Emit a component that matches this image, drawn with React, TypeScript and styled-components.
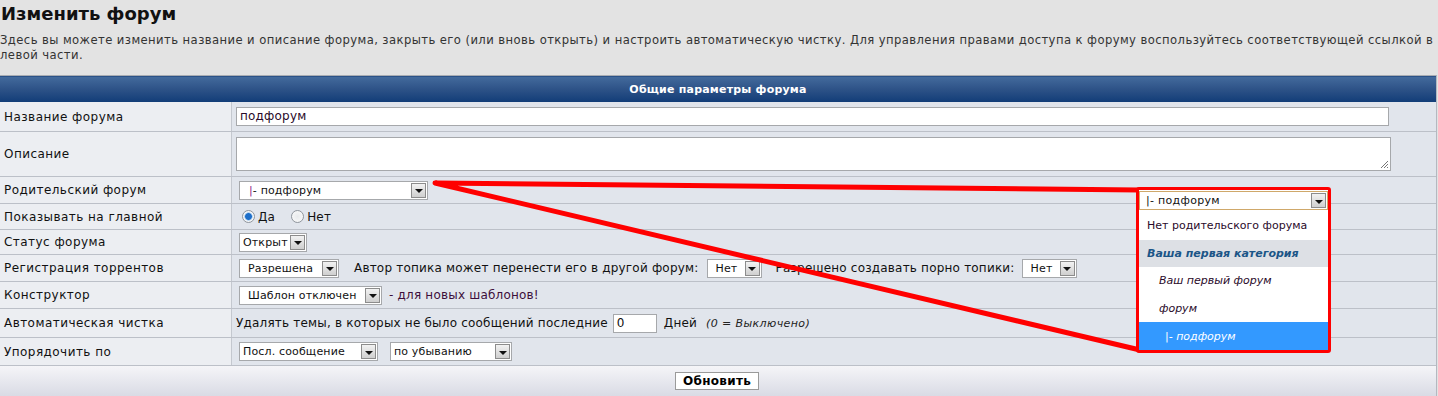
import React, { FunctionComponent } from 'react';
import styled, { createGlobalStyle } from 'styled-components';

const GlobalStyle = createGlobalStyle`
  html, body {
    margin: 0;
    padding: 0;
    background: #e3e3e3;
    font-family: "DejaVu Sans", Verdana, sans-serif;
    color: #000;
  }
`;

const Page = styled.div`
  position: relative;
  width: 1438px;
  height: 396px;
  overflow: hidden;
`;

const Title = styled.h1`
  margin: 0;
  padding: 0 0 0 1px;
  font-size: 18px;
  font-weight: bold;
  line-height: 28px;
  color: #111;
`;

const Intro = styled.p`
  margin: 5px 0 12px 0;
  font-size: 11.6px;
  letter-spacing: 0.42px;
  line-height: 15px;
  color: #333;
  padding-right: 4px;
`;

const Table = styled.div`
  width: 1436px;
  border-right: 1px solid #b4b8c0;
  border-top: 1px solid #a9adb3;
`;

const HeadBar = styled.div`
  height: 25px;
  border-top: 1px solid #2b5288;
  background: linear-gradient(#436a9c, #2d5287 50%, #123d78);
  color: #fff;
  font-size: 11px;
  font-weight: bold;
  letter-spacing: 0.2px;
  display: flex;
  align-items: center;
  justify-content: center;
`;

const Row = styled.div<{ $h: number }>`
  display: flex;
  height: ${p => p.$h}px;
  border-bottom: 1px solid #bcc0c8;
  box-sizing: border-box;
`;

const Label = styled.div`
  width: 232px;
  flex: none;
  background: #eceef2;
  border-right: 1px solid #c4c8cf;
  display: flex;
  align-items: center;
  padding-left: 4px;
  box-sizing: border-box;
  font-size: 12px;
  letter-spacing: 0.45px;
  color: #111;
`;

const Cell = styled.div`
  flex: 1;
  background: #e1e5ec;
  display: flex;
  align-items: center;
  padding-left: 4px;
  font-size: 12px;
  letter-spacing: 0.2px;
  color: #111;
  white-space: nowrap;
`;

const TextInput = styled.div<{ $w: number }>`
  width: ${p => p.$w}px;
  height: 19px;
  box-sizing: border-box;
  background: #fff;
  border: 1px solid #a6a8ab;
  font-size: 12px;
  line-height: 17px;
  padding-left: 3px;
  color: #2a0a2a;
`;

const TextArea = styled.div`
  position: relative;
  width: 1155px;
  height: 34px;
  box-sizing: border-box;
  background: #fff;
  border: 1px solid #a6a8ab;
`;

const Grip = styled.svg`
  position: absolute;
  right: 1px;
  bottom: 1px;
`;

const Select = styled.div<{ $w: number; $pad?: number; $ml?: number }>`
  width: ${p => p.$w}px;
  height: 19px;
  margin-left: ${p => p.$ml ?? 3}px;
  box-sizing: border-box;
  background: #fff;
  border: 1px solid #a6a8ab;
  display: flex;
  align-items: center;
  padding-left: ${p => p.$pad ?? 3}px;
  font-size: 11px;
  letter-spacing: 0.15px;
  color: #111;
`;

const SelectText = styled.span`
  flex: 1;
  overflow: hidden;
  white-space: nowrap;
`;

const Pipe = styled.span`
  color: #8a1a8a;
`;

const ArrowBtn = styled.span`
  flex: none;
  width: 15px;
  height: 15px;
  margin-right: 1px;
  box-sizing: border-box;
  border: 1px solid #8c8c8c;
  background: linear-gradient(#f2f2f2, #cfcfcf);
  display: flex;
  align-items: center;
  justify-content: center;
  &::after {
    content: '';
    border-left: 4px solid transparent;
    border-right: 4px solid transparent;
    border-top: 4px solid #111;
    margin-top: 2px;
  }
`;

const Radio = styled.span<{ $on?: boolean; $ml?: number }>`
  width: 11px;
  height: 11px;
  border-radius: 50%;
  border: 1px solid #8f959c;
  background: ${p => p.$on
    ? 'radial-gradient(circle, #1e6ec8 0 3px, #7fb2e6 3.5px, #f4f6f8 4.5px)'
    : 'radial-gradient(circle, #e8eaec, #fbfbfb)'};
  margin: 0 3px 0 ${p => p.$ml ?? 6}px;
  flex: none;
`;

const Text = styled.span<{ $ml?: number; $color?: string }>`
  margin-left: ${p => p.$ml ?? 0}px;
  color: ${p => p.$color ?? '#111'};
`;

const Hint = styled.i`
  margin-left: 9px;
  font-size: 11px;
  letter-spacing: 0.4px;
  color: #222;
`;

const SmallInput = styled(TextInput)`
  margin-left: 5px;
  color: #111;
`;

const Footer = styled.div`
  height: 31px;
  background: linear-gradient(#f5f5f8, #d8dae4);
  display: flex;
  justify-content: center;
  padding-top: 6px;
  box-sizing: border-box;
`;

const Button = styled.div`
  width: 84px;
  height: 18px;
  box-sizing: border-box;
  background: #fff;
  border: 1px solid #9a9a9a;
  font-size: 12px;
  font-weight: bold;
  letter-spacing: 0.3px;
  text-align: center;
  line-height: 16px;
  margin-left: -2px;
`;

const Overlay = styled.svg`
  position: absolute;
  left: 0;
  top: 0;
  pointer-events: none;
`;

const Popup = styled.div`
  position: absolute;
  left: 1136px;
  top: 187px;
  width: 195px;
  height: 166px;
  box-sizing: border-box;
  border: 3px solid #ff0000;
  border-radius: 3px;
  background: #fff;
  font-size: 11px;
  color: #2a0a2a;
`;

const PopupHead = styled.div`
  height: 19px;
  margin: 1px 0 2px;
  box-sizing: border-box;
  border: 1px solid #cfa86a;
  display: flex;
  align-items: center;
  padding-left: 6px;
  font-size: 11px;
  letter-spacing: 0.3px;
  color: #111;
`;

const Option = styled.div<{ $indent?: number; $kind?: 'cat' | 'sel' | 'sub' }>`
  height: 27.6px;
  display: flex;
  align-items: center;
  padding-left: ${p => 8 + (p.$indent ?? 0)}px;
  font-style: ${p => (p.$kind ? 'italic' : 'normal')};
  font-weight: ${p => (p.$kind === 'cat' ? 'bold' : 'normal')};
  background: ${p => (p.$kind === 'cat' ? '#dde0e5' : p.$kind === 'sel' ? '#3399ff' : '#fff')};
  color: ${p => (p.$kind === 'cat' ? '#1b5587' : p.$kind === 'sel' ? '#fff' : '#2a0a2a')};
`;

type SelProps = { w: number; pad?: number; ml?: number };

const FakeSelect: FunctionComponent<React.PropsWithChildren<SelProps>> = ({ w, pad, ml, children }) => (
  <Select $w={w} $pad={pad} $ml={ml}>
    <SelectText>{children}</SelectText>
    <ArrowBtn />
  </Select>
);

const App: FunctionComponent = () => {
  return (
    <Page>
      <GlobalStyle />
      <Title>Изменить форум</Title>
      <Intro>
        Здесь вы можете изменить название и описание форума, закрыть его (или вновь открыть) и настроить автоматическую чистку. Для управления правами доступа к форуму воспользуйтесь соответствующей ссылкой в левой части.
      </Intro>
      <Table>
        <HeadBar>Общие параметры форума</HeadBar>
        <Row $h={30}>
          <Label>Название форума</Label>
          <Cell><TextInput $w={1153}>подфорум</TextInput></Cell>
        </Row>
        <Row $h={45}>
          <Label>Описание</Label>
          <Cell>
            <TextArea>
              <Grip width="10" height="10" viewBox="0 0 10 10">
                <path d="M9 2 L2 9 M9 5 L5 9 M9 8 L8 9" stroke="#777" strokeWidth="1" />
              </Grip>
            </TextArea>
          </Cell>
        </Row>
        <Row $h={27}>
          <Label>Родительский форум</Label>
          <Cell>
            <FakeSelect w={189} pad={9}><Pipe>|</Pipe>- подфорум</FakeSelect>
          </Cell>
        </Row>
        <Row $h={26}>
          <Label>Показывать на главной</Label>
          <Cell>
            <Radio $on />Да
            <Radio $ml={16} />Нет
          </Cell>
        </Row>
        <Row $h={25}>
          <Label>Статус форума</Label>
          <Cell><FakeSelect w={68}>Открыт</FakeSelect></Cell>
        </Row>
        <Row $h={27}>
          <Label>Регистрация торрентов</Label>
          <Cell>
            <FakeSelect w={100} pad={8}>Разрешена</FakeSelect>
            <Text $ml={15}>Автор топика может перенести его в другой форум:</Text>
            <FakeSelect w={55} pad={8} ml={8}>Нет</FakeSelect>
            <Text $ml={14}>Разрешено создавать порно топики:</Text>
            <FakeSelect w={55} pad={8} ml={7}>Нет</FakeSelect>
          </Cell>
        </Row>
        <Row $h={27}>
          <Label>Конструктор</Label>
          <Cell>
            <FakeSelect w={143} pad={8}>Шаблон отключен</FakeSelect>
            <Text $ml={7} $color="#3d0f3b">- для новых шаблонов!</Text>
          </Cell>
        </Row>
        <Row $h={29}>
          <Label>Автоматическая чистка</Label>
          <Cell>
            <Text>Удалять темы, в которых не было сообщений последние</Text>
            <SmallInput $w={44}>0</SmallInput>
            <Text $ml={7}>Дней</Text>
            <Hint>(0 = Выключено)</Hint>
          </Cell>
        </Row>
        <Row $h={28}>
          <Label>Упорядочить по</Label>
          <Cell>
            <FakeSelect w={139}>Посл. сообщение</FakeSelect>
            <FakeSelect w={122} ml={12}>по убыванию</FakeSelect>
          </Cell>
        </Row>
        <Footer>
          <Button>Обновить</Button>
        </Footer>
      </Table>

      <Overlay width="1438" height="396" viewBox="0 0 1438 396">
        <path d="M1140 190 L435 183 L1140 350" fill="none" stroke="#ff0000" strokeWidth="5" strokeLinejoin="round" strokeLinecap="round" />
      </Overlay>

      <Popup>
        <PopupHead>
          <SelectText>|- подфорум</SelectText>
          <ArrowBtn />
        </PopupHead>
        <Option>Нет родительского форума</Option>
        <Option $kind="cat">Ваша первая категория</Option>
        <Option $kind="sub" $indent={12}>Ваш первый форум</Option>
        <Option $kind="sub" $indent={12}>форум</Option>
        <Option $kind="sel" $indent={18}>|- подфорум</Option>
      </Popup>
    </Page>
  );
};

export default App;
